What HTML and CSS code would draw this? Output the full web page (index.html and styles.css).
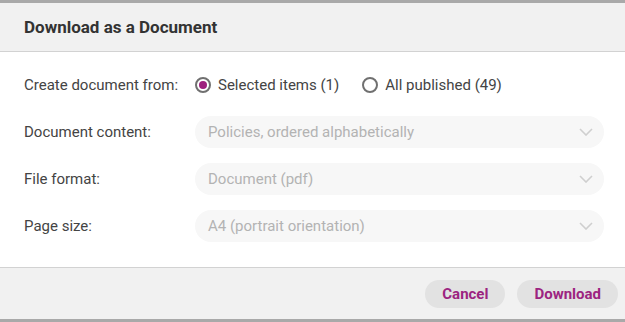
FILE: index.html
```html
<!DOCTYPE html>
<html lang="en">
<head>
    <meta charset="UTF-8">
    <meta name="viewport" content="width=device-width, initial-scale=1.0">
    <title>Download as a Document</title>
    <link rel="stylesheet" href="styles.css">
</head>
<body>
    <div class="dialog">
        <div class="dialog-header">Download as a Document</div>
        <div class="dialog-body">
            <div class="row">
                <span class="label">Create document from:</span>
                <div class="radios">
                    <label class="radio checked"><span class="dot"></span>Selected items (1)</label>
                    <label class="radio"><span class="dot"></span>All published (49)</label>
                </div>
            </div>
            <div class="row">
                <span class="label">Document content:</span>
                <div class="select">
                    <span>Policies, ordered alphabetically</span>
                    <svg class="chevron" width="14" height="8" viewBox="0 0 14 8"><path d="M1 1l6 6 6-6" fill="none" stroke="#cfcfcf" stroke-width="1.6"/></svg>
                </div>
            </div>
            <div class="row">
                <span class="label">File format:</span>
                <div class="select">
                    <span>Document (pdf)</span>
                    <svg class="chevron" width="14" height="8" viewBox="0 0 14 8"><path d="M1 1l6 6 6-6" fill="none" stroke="#cfcfcf" stroke-width="1.6"/></svg>
                </div>
            </div>
            <div class="row">
                <span class="label">Page size:</span>
                <div class="select">
                    <span>A4 (portrait orientation)</span>
                    <svg class="chevron" width="14" height="8" viewBox="0 0 14 8"><path d="M1 1l6 6 6-6" fill="none" stroke="#cfcfcf" stroke-width="1.6"/></svg>
                </div>
            </div>
        </div>
        <div class="dialog-footer">
            <button class="btn">Cancel</button>
            <button class="btn">Download</button>
        </div>
    </div>
</body>
</html>
```
FILE: styles.css
```css
body {
    margin: 0;
    font-family: Roboto, "Liberation Sans", sans-serif;
    background: #a9a9a9;
    height: 322px;
    overflow: hidden;
}
.dialog {
    margin-top: 3px;
    background: #fff;
    height: 316px;
    display: flex;
    flex-direction: column;
}
.dialog-header {
    height: 48px;
    line-height: 48px;
    background: #f1f1f1;
    border-bottom: 1px solid #d2d2d2;
    padding-left: 24px;
    font-size: 17px;
    font-weight: bold;
    color: #333;
}
.dialog-body {
    flex: 1;
    padding: 17px 21px 0 24px;
    display: flex;
    flex-direction: column;
    gap: 15px;
}
.row {
    display: flex;
    align-items: center;
    height: 32px;
}
.label {
    width: 171px;
    font-size: 15px;
    color: #444;
}
.radios {
    display: flex;
    gap: 23px;
    font-size: 15px;
    color: #444;
}
.radio {
    display: flex;
    align-items: center;
    gap: 7px;
}
.dot {
    width: 12px;
    height: 12px;
    border: 2px solid #707070;
    border-radius: 50%;
    position: relative;
}
.radio.checked .dot::after {
    content: "";
    position: absolute;
    left: 2px;
    top: 2px;
    width: 8px;
    height: 8px;
    border-radius: 50%;
    background: #9e1f7e;
}
.select {
    flex: 1;
    height: 32px;
    border-radius: 16px;
    background: #f7f7f7;
    display: flex;
    align-items: center;
    justify-content: space-between;
    padding: 0 11px 0 13px;
    font-size: 15px;
    color: #b3b3b3;
}
.dialog-footer {
    height: 51px;
    background: #f1f1f1;
    border-top: 1px solid #d2d2d2;
    display: flex;
    justify-content: flex-end;
    align-items: center;
    gap: 12px;
    padding-right: 7px;
}
.btn {
    height: 28px;
    padding: 0 17px;
    border: none;
    border-radius: 14px;
    background: #e2e2e2;
    color: #9c2480;
    font-family: Roboto, "Liberation Sans", sans-serif;
    font-size: 15px;
    font-weight: bold;
    cursor: pointer;
}
```
